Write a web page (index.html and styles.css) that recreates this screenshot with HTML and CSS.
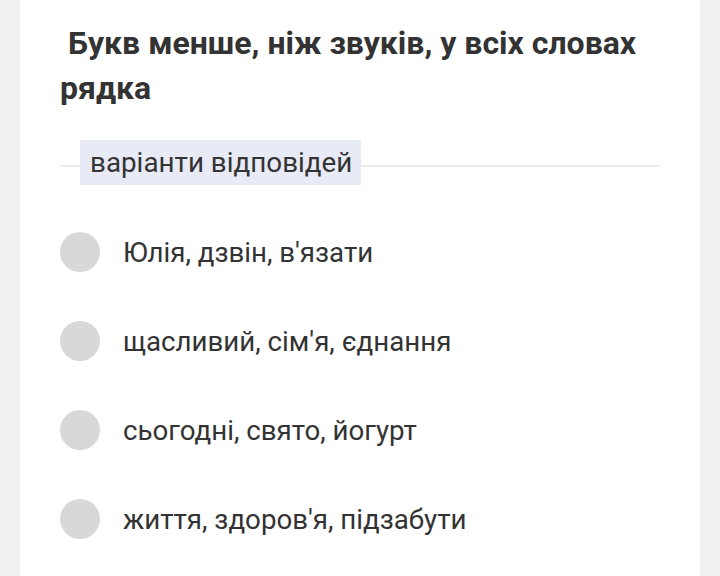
FILE: index.html
```html
<!DOCTYPE html>
<html lang="uk">
<head>
<meta charset="utf-8">
<link rel="stylesheet" href="styles.css">
</head>
<body>
<div class="card">
  <h1 class="title">&nbsp;Букв менше, ніж звуків, у всіх словах рядка</h1>
  <div class="legend">
    <span class="legend-label">варіанти відповідей</span>
  </div>
  <ul class="options">
    <li class="option"><span class="radio"></span><span class="option-text">Юлія, дзвін, в'язати</span></li>
    <li class="option"><span class="radio"></span><span class="option-text">щасливий, сім'я, єднання</span></li>
    <li class="option"><span class="radio"></span><span class="option-text">сьогодні, свято, йогурт</span></li>
    <li class="option"><span class="radio"></span><span class="option-text">життя, здоров'я, підзабути</span></li>
  </ul>
</div>
</body>
</html>
```
FILE: styles.css
```css
html, body {
  margin: 0;
  padding: 0;
  background: #f1f1f1;
  font-family: Roboto, "Noto Sans", sans-serif;
  color: #333;
}
.card {
  margin: 0 20px;
  background: #fff;
  padding: 21px 40px 0 40px;
  min-height: 576px;
  box-sizing: border-box;
}
.title {
  margin: 0;
  font-size: 32px;
  font-weight: 700;
  line-height: 45px;
  color: #333;
}
.legend {
  margin-top: 29px;
  position: relative;
  display: flex;
  align-items: center;
  height: 45px;
}
.legend::before {
  content: "";
  position: absolute;
  left: 0;
  right: 0;
  top: calc(50% + 2px);
  border-top: 2px solid #ececec;
}
.legend-label {
  position: relative;
  margin-left: 20px;
  background: #e8eaf6;
  padding: 0 9px 0 10px;
  line-height: 45px;
  font-size: 27.8px;
  color: #333;
}
.options {
  list-style: none;
  margin: 47px 0 0;
  padding: 0;
  display: flex;
  flex-direction: column;
  gap: 49px;
}
.option {
  display: flex;
  align-items: center;
  height: 40px;
}
.radio {
  width: 40px;
  height: 40px;
  border-radius: 50%;
  background: #d8d8d8;
  flex: none;
}
.option-text {
  margin-left: 23px;
  font-size: 27.7px;
  color: #333;
}
```
